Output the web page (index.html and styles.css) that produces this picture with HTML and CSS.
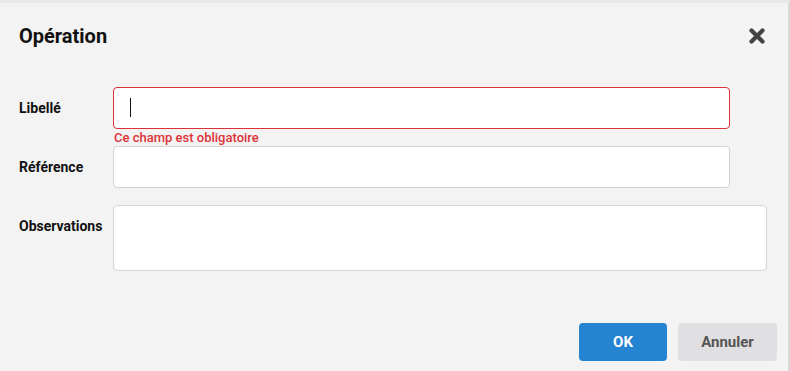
FILE: index.html
```html
<!DOCTYPE html>
<html lang="fr">
<head>
  <meta charset="UTF-8">
  <meta name="viewport" content="width=device-width, initial-scale=1.0">
  <title>Opération</title>
  <link rel="stylesheet" href="styles.css">
</head>
<body>

<div class="dialog">
  <div class="dialog-header">
    <h1>Opération</h1>
    <button class="close-btn" type="button" aria-label="Fermer">
      <svg width="16" height="16" viewBox="0 0 16 16">
        <path d="M2.5 2.5 L13.5 13.5 M13.5 2.5 L2.5 13.5" stroke="#434343" stroke-width="4.2" stroke-linecap="round"/>
      </svg>
    </button>
  </div>

  <form class="dialog-body">
    <div class="form-row">
      <label for="libelle">Libellé</label>
      <div class="field">
        <div class="input-wrap">
          <input type="text" id="libelle" class="input input-error">
          <span class="caret"></span>
        </div>
        <div class="error-text">Ce champ est obligatoire</div>
      </div>
    </div>
    <div class="form-row">
      <label for="reference">Référence</label>
      <div class="field">
        <input type="text" id="reference" class="input">
      </div>
    </div>
    <div class="form-row">
      <label for="observations">Observations</label>
      <div class="field field-wide">
        <textarea id="observations" class="textarea"></textarea>
      </div>
    </div>
  </form>

  <div class="dialog-footer">
    <button type="button" class="btn btn-primary">OK</button>
    <button type="button" class="btn btn-secondary">Annuler</button>
  </div>
</div>

</body>
</html>
```

FILE: styles.css
```css
html, body {
  margin: 0;
  padding: 0;
  background: #f3f3f3;
}
body {
  font-family: Roboto, "Liberation Sans", Arial, sans-serif;
  color: #111;
}
.dialog {
  width: 788px;
  height: 368px;
  border-top: 3px solid #e8e8e8;
  border-right: 2px solid #dadada;
  background: #f3f3f3;
}
.dialog-header {
  display: flex;
  align-items: center;
  justify-content: space-between;
  padding: 21px 23px 0 19px;
  height: 24px;
}
.dialog-header h1 {
  margin: 0;
  font-size: 20px;
  line-height: 24px;
  font-weight: 700;
}
.close-btn {
  border: none;
  background: none;
  padding: 0;
  width: 16px;
  height: 16px;
  cursor: pointer;
  display: block;
}
.close-btn svg {
  display: block;
}
.dialog-body {
  margin: 39px 0 0 0;
  padding-left: 19px;
  display: flex;
  flex-direction: column;
  gap: 17px;
}
.form-row {
  display: flex;
  align-items: flex-start;
}
.form-row label {
  width: 94px;
  flex-shrink: 0;
  font-size: 14px;
  font-weight: 700;
  line-height: 42px;
}
.field {
  width: 617px;
}
.field-wide {
  width: 654px;
}
.input-wrap {
  position: relative;
}
.input, .textarea {
  box-sizing: border-box;
  width: 100%;
  height: 42px;
  border: 1px solid #d4d4d4;
  border-radius: 4px;
  background: #fff;
  padding: 0 16px;
  font-family: inherit;
  font-size: 14px;
  outline: none;
  display: block;
}
.textarea {
  height: 66px;
  resize: none;
}
.input-error {
  border-color: #dc3237;
}
.caret {
  position: absolute;
  left: 17px;
  top: 11px;
  width: 1px;
  height: 19px;
  background: #111;
}
.error-text {
  color: #dc3237;
  font-size: 13px;
  font-weight: 500;
  line-height: 17px;
  height: 17px;
  padding-left: 1px;
  margin-bottom: -17px;
}
.dialog-footer {
  display: flex;
  justify-content: flex-end;
  gap: 11px;
  padding-right: 11px;
  margin-top: 52px;
}
.btn {
  height: 38px;
  border: none;
  border-radius: 4px;
  font-family: inherit;
  font-size: 15px;
  font-weight: 700;
  cursor: pointer;
}
.btn-primary {
  width: 88px;
  background: #2484d2;
  color: #fff;
}
.btn-secondary {
  width: 99px;
  background: #e0e0e2;
  color: #555;
}
```
